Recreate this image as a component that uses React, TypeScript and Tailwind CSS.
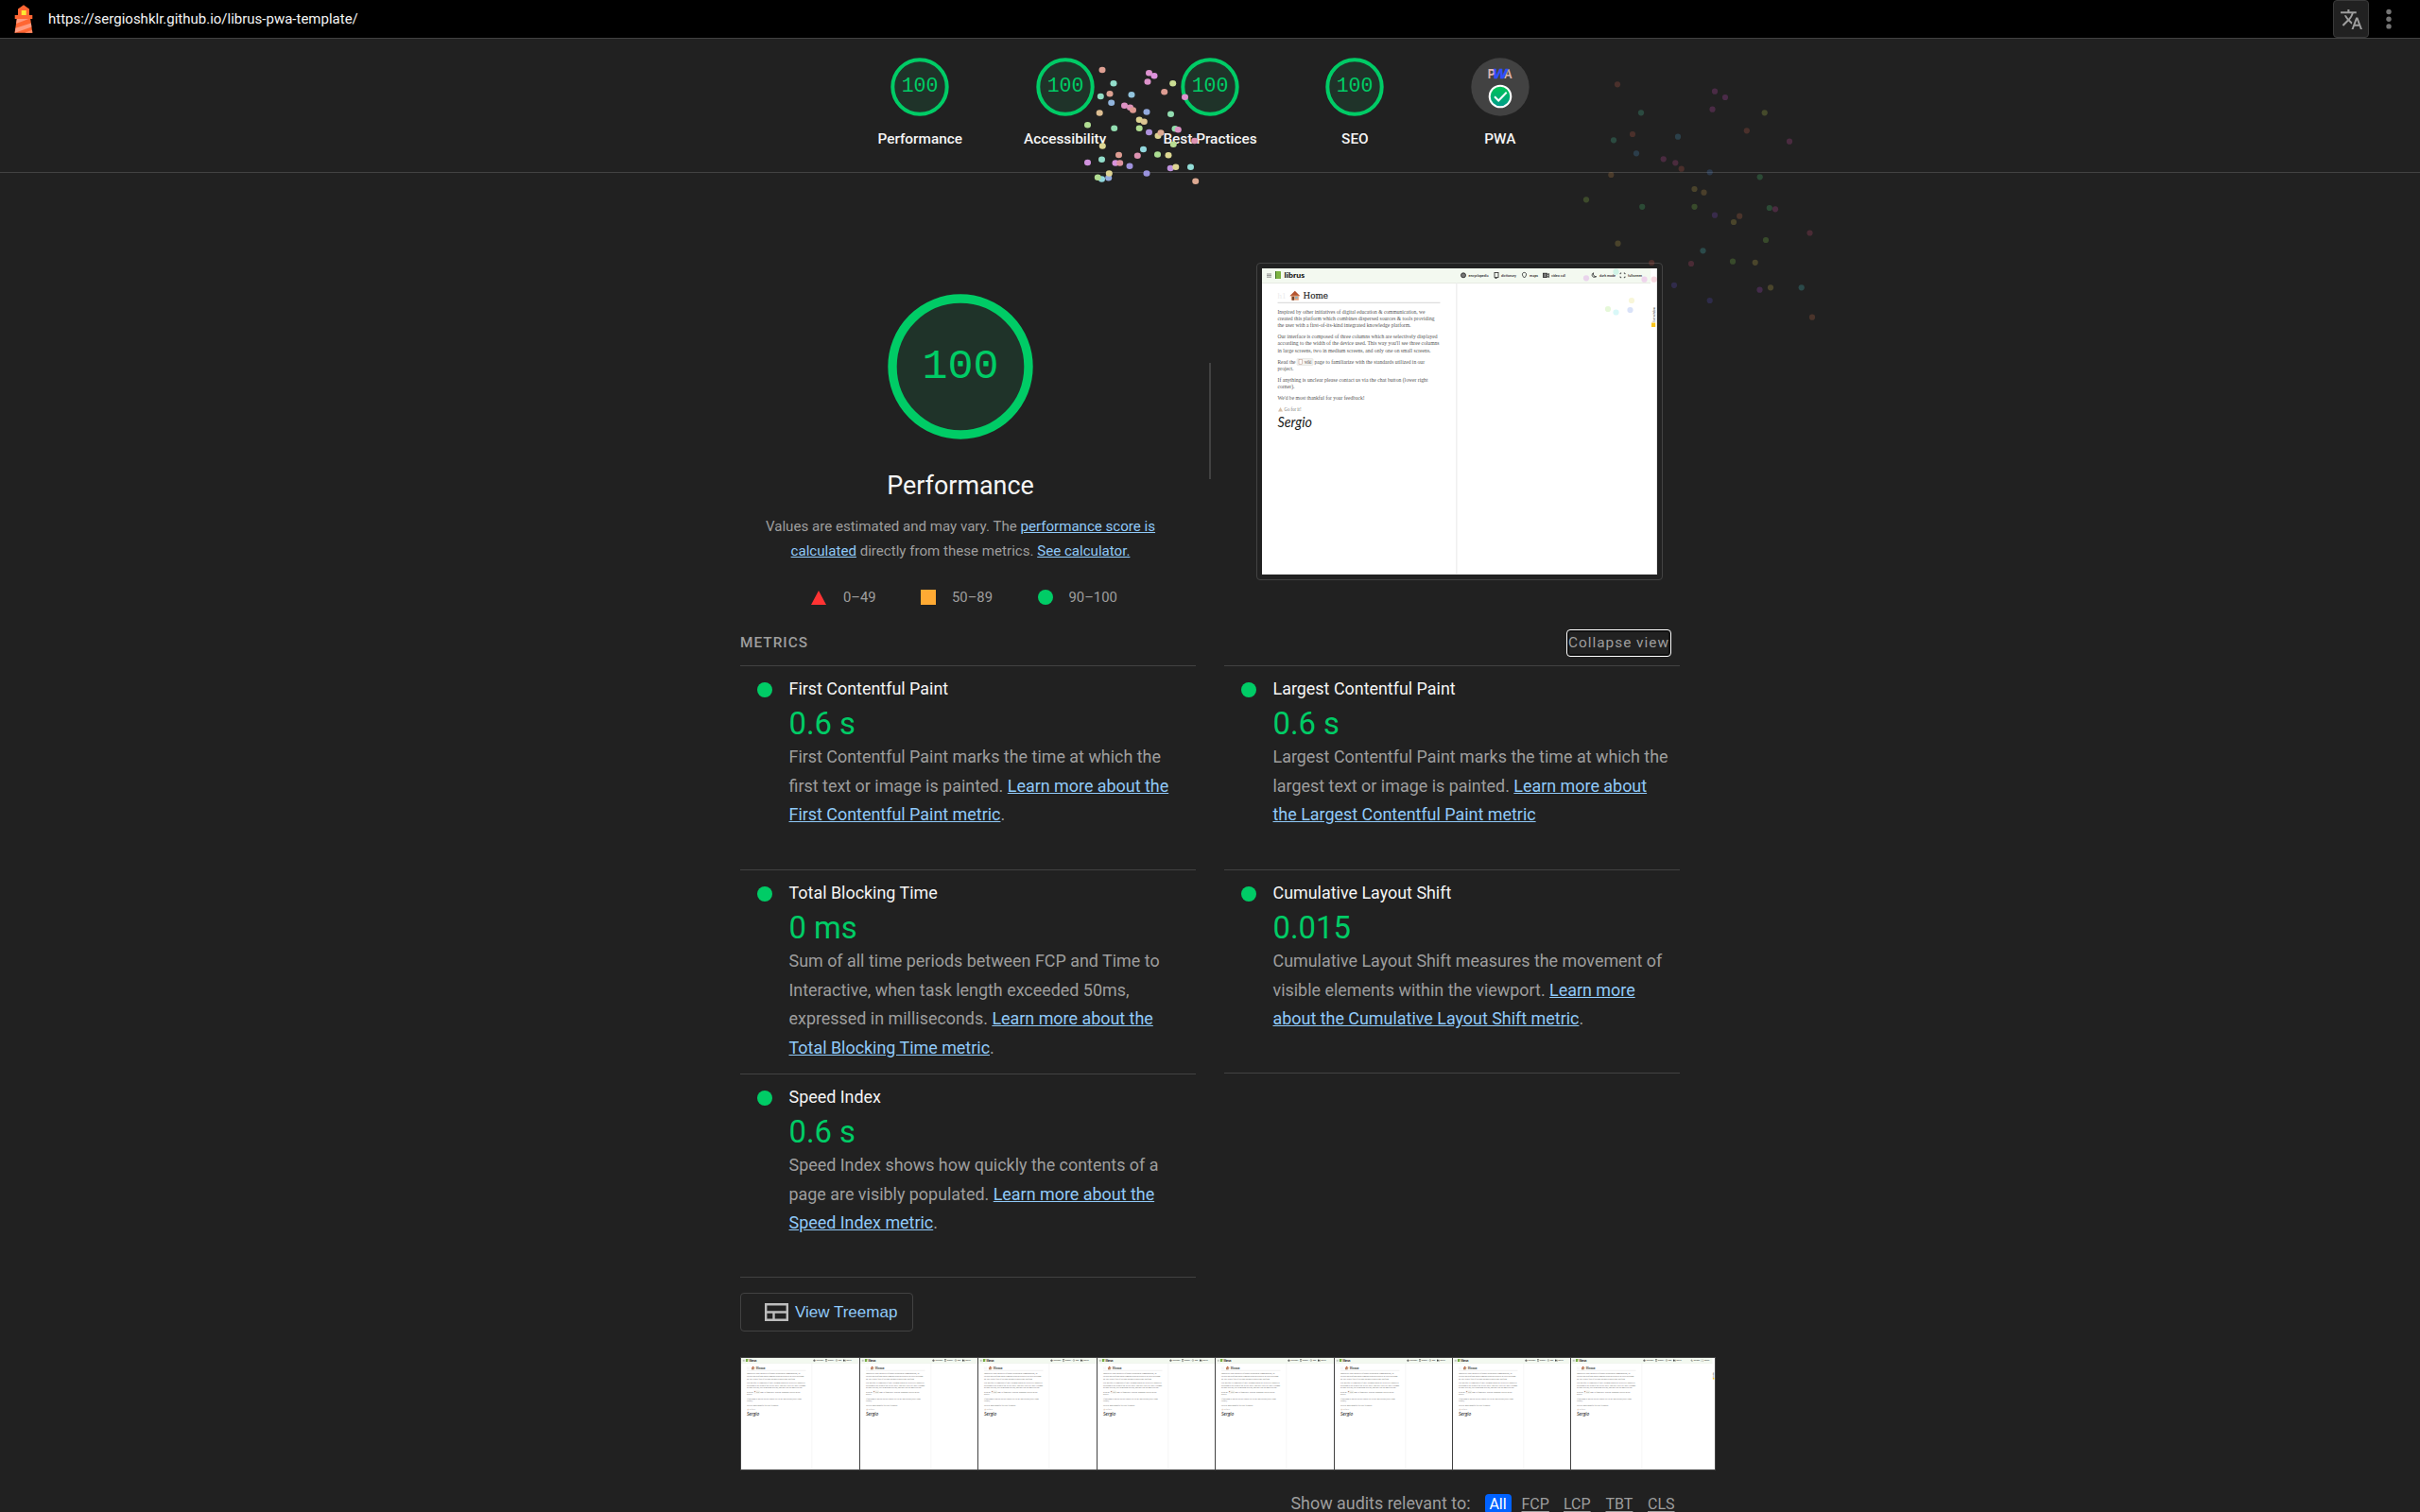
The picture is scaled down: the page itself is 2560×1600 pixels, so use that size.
import type { ReactNode } from "react";

const GREEN = "#00cc66";

function Lighthouse() {
  return (
    <svg className="h-[30px] w-5 shrink-0" viewBox="0 0 20 30">
      <path d="M4 4.500 10 0.200l6 4.300V11h3.300v4H0.700v-4H4z" fill="#f63" />
      <path d="M2.800 15h14.400l2.100 14.800H0.500z" fill="#f63" />
      <path d="M2.800 15h12.500L2.200 20z" fill="#ff9b80" />
      <path d="M17.900 19.500l.5 4L0.700 29.800l.8-5z" fill="#ff9b80" />
      <path d="M11 29.800l8-3 .3 3z" fill="#ff8a65" />
      <rect x="7.700" y="6" width="5" height="5" fill="#fdea32" />
    </svg>
  );
}

function TopBar() {
  return (
    <div className="flex h-[41px] items-center border-b border-[#424242] bg-black pl-[15px]">
      <Lighthouse />
      <span className="ml-4 flex-1 text-[15px] leading-5 text-[#f5f5f5]">https://sergioshklr.github.io/librus-pwa-template/</span>
      <button className="flex h-10 w-[38px] items-center justify-center rounded-[4px] border border-[#3a3a3a] bg-[#212121]">
        <svg className="size-[25px]" viewBox="0 0 24 24" fill="#9e9e9e">
          <path d="M12.870 15.070l-2.540-2.510.03-.03c1.740-1.940 2.980-4.170 3.710-6.530H17V4h-7V2H8v2H1v1.990h11.170C11.500 7.920 10.440 9.750 9 11.350 8.070 10.320 7.300 9.190 6.690 8h-2c.73 1.630 1.730 3.170 2.980 4.560l-5.090 5.020L4 19l5-5 3.110 3.110.76-2.040zM18.500 10h-2L12 22h2l1.120-3h4.750L21 22h2l-4.500-12zm-2.620 7l1.620-4.330L19.120 17h-3.240z" />
        </svg>
      </button>
      <svg className="ml-[15px] mr-[27px] h-6 w-[12px]" viewBox="0 0 12 24" fill="#757575">
        <circle cx="6" cy="4.500" r="2.700" />
        <circle cx="6" cy="12.200" r="2.700" />
        <circle cx="6" cy="19.900" r="2.700" />
      </svg>
    </div>
  );
}

function SmallGauge() {
  return (
    <svg className="size-[62px]" viewBox="0 0 62 62">
      <circle cx="31" cy="31" r="28.700" fill="#1f3329" stroke={GREEN} strokeWidth="4" />
      <text x="31" y="36.300" textAnchor="middle" fontSize="21.500" fill={GREEN} className="font-['Liberation_Mono',monospace]">100</text>
    </svg>
  );
}

function PwaGauge() {
  return (
    <svg className="size-[62px]" viewBox="0 0 62 62">
      <defs>
        <linearGradient id="pwa-check" x1="0" y1="0" x2="0" y2="1">
          <stop offset="0" stopColor="#00c853" />
          <stop offset="1" stopColor="#00998c" />
        </linearGradient>
      </defs>
      <circle cx="31" cy="31" r="30.700" fill="#424242" />
      <g className="font-['Liberation_Sans',sans-serif]" fontWeight="700">
        <text x="17.800" y="22" fontSize="14" textLength="8" lengthAdjust="spacingAndGlyphs" fill="#dcb5b1">P</text>
        <text x="34.800" y="22" fontSize="14" textLength="9" lengthAdjust="spacingAndGlyphs" fill="#dcb5b1">A</text>
        <text x="23.300" y="22" fontSize="14" fontStyle="italic" textLength="15" lengthAdjust="spacingAndGlyphs" fill="#304ffe" stroke="#304ffe" strokeWidth=".5">W</text>
      </g>
      <circle cx="31" cy="41" r="11.300" fill="url(#pwa-check)" stroke="#fff" strokeWidth="2" />
      <path d="M25 41.300l4.200 4.200 8.500-8.800" fill="none" stroke="#fff" strokeWidth="2" />
    </svg>
  );
}

function ScoresHeader() {
  return (
    <div className="flex h-[142px] justify-center border-b border-[#424242] pt-5">
      {["Performance", "Accessibility", "Best Practices", "SEO", "PWA"].map((name) => (
        <div key={name} className="flex w-[153.400px] flex-col items-center">
          {name === "PWA" ? <PwaGauge /> : <SmallGauge />}
          <span className="mt-[13.500px] text-[15.360px] font-medium leading-5 text-[#f5f5f5]">{name}</span>
        </div>
      ))}
    </div>
  );
}

const LINES: [number, number, string][] = [
  [48.500, 156, "Inspired by other initiatives of digital education & communication, we"],
  [55.700, 166, "created this platform which combines dispersed sources & tools providing"],
  [63, 141, "the user with a first-of-its-kind integrated knowledge platform."],
  [74.800, 169, "Our interface is composed of three columns which are selectively displayed"],
  [82, 171, "according to the width of the device used. This way you'll see three columns"],
  [89.200, 162, "in large screens, two in medium screens, and only one on small screens."],
  [108.400, 17, "project."],
  [120.300, 159, "If anything is unclear please contact us via the chat button (lower right"],
  [127.500, 18, "corner)."],
  [139.500, 92, "We'd be most thankful for your feedback!"],
];

function PageScene({ full }: { full: boolean }) {
  const serif = "font-['Liberation_Serif',serif]";
  return (
    <svg className="block size-full" viewBox="0 0 418 324" preserveAspectRatio="none">
      <rect width="418" height="324" fill="#fff" />
      <rect width="411" height="15.500" fill="#f3f9f0" />
      <path d="M0 15.500h411" stroke="#dfe4da" strokeWidth=".7" />
      <path d="M205.800 15.500V324" stroke="#f0f0f0" strokeWidth="1.600" />
      <path d="M0 323.500h418M417.500 0v324" stroke="#e8e8e8" strokeWidth="1" />
      <path d="M5 6h5M5 7.600h5M5 9.200h5" stroke="#777" strokeWidth=".8" />
      <rect x="14" y="3" width="6" height="8" rx=".6" fill="#7cb342" />
      <path d="M14.500 3v8" stroke="#386a20" strokeWidth=".9" />
      <g className="font-['Lato',sans-serif]">
        <text x="23.500" y="9.800" fontSize="8" fontWeight="900" textLength="21.500" lengthAdjust="spacingAndGlyphs" fill="#111">librus</text>
        <g fontSize="4.200" fontWeight="700" fill="#333">
          <text x="218.500" y="8.600" textLength="21" lengthAdjust="spacingAndGlyphs">encyclopedia</text>
          <text x="253" y="8.600" textLength="16" lengthAdjust="spacingAndGlyphs">dictionary</text>
          <text x="283" y="8.600" textLength="9" lengthAdjust="spacingAndGlyphs">maps</text>
          <text x="306" y="8.600" textLength="15" lengthAdjust="spacingAndGlyphs">video call</text>
          {full && <text x="357" y="8.600" textLength="17" lengthAdjust="spacingAndGlyphs">dark mode</text>}
          {full && <text x="387" y="8.600" textLength="15" lengthAdjust="spacingAndGlyphs">fullscreen</text>}
        </g>
      </g>
      <g fill="none" stroke="#222" strokeWidth=".8">
        <circle cx="213" cy="7.300" r="2.500" fill="#777" />
        <rect x="246" y="4.500" width="4" height="5" />
        <path d="M246.500 10.500h2" />
        <path d="M277.500 10c-3.200-3-2.300-5.600 0-5.600s3.200 2.600 0 5.600z" />
        <rect x="297.500" y="5.200" width="4" height="4.200" fill="#777" />
        <path d="M302 6.500l1.500-1v4l-1.500-1" />
        {full && <path d="M350.500 4.700c-3 2.600-.5 6 3.200 4-2.600.3-3.700-2-3.200-4z" />}
        {full && <path d="M379 6.200V5h1.200M382.800 5H384v1.200M384 8.500v1.200h-1.200M380.200 9.700H379V8.500" />}
      </g>
      <text x="16.500" y="31.800" fontSize="9" textLength="9" fill="#ececec" className={serif}>h1</text>
      <path d="M29.300 29.300l5.500-5.500 5.500 5.500z" fill="#b5542f" />
      <rect x="30.800" y="28.700" width="8" height="5" fill="#e2a27c" />
      <rect x="31.800" y="29.800" width="2.200" height="3.900" fill="#70452f" />
      <rect x="35.200" y="29.800" width="2.400" height="2" fill="#7fb3cc" />
      <text x="43.500" y="32" fontSize="10" textLength="26.500" lengthAdjust="spacingAndGlyphs" fill="#222" stroke="#222" strokeWidth=".2" className="font-['DejaVu_Serif',serif]">Home</text>
      <path d="M16.500 36.300h172" stroke="#ccc" strokeWidth=".8" />
      <g fontSize="5.200" fill="#555" className={serif}>
        {LINES.map(([y, w, t]) => (
          <text key={y} x="16.500" y={y - 0.7} textLength={w} lengthAdjust="spacingAndGlyphs">{t}</text>
        ))}
        <text x="16.500" y="100.500" textLength="19" lengthAdjust="spacingAndGlyphs">Read the</text>
        <rect x="37" y="95.500" width="17" height="7" rx="1" fill="#f3f3f0" stroke="#d5d5d0" strokeWidth=".4" />
        <rect x="39" y="96.700" width="3.400" height="4.500" fill="#fff" stroke="#b98a7a" strokeWidth=".5" />
        <text x="45" y="100.500" textLength="7.500" lengthAdjust="spacingAndGlyphs">wiki</text>
        <text x="55.500" y="100.500" textLength="116.500" lengthAdjust="spacingAndGlyphs">page to familiarize with the standards utilized in our</text>
        <text x="23.500" y="151" textLength="18" lengthAdjust="spacingAndGlyphs" fill="#777">Go for it!</text>
      </g>
      <path d="M17 151.500l2.500-4.500 2.500 4.500z" fill="#d8c0a8" />
      <text x="16.500" y="167.500" fontSize="15.500" fontStyle="italic" textLength="36.500" lengthAdjust="spacingAndGlyphs" fill="#1a1a1a" className="font-['Lato',cursive]">Sergio</text>
      {full && (
        <g>
          <rect x="412" y="57.500" width="4.200" height="4.500" fill="#f9c51d" />
          <text transform="translate(415.600 56.500) rotate(-90)" fontSize="3.600" textLength="15.500" lengthAdjust="spacingAndGlyphs" fill="#333" className="font-['Lato',sans-serif]">live window</text>
        </g>
      )}
    </svg>
  );
}

function Link({ children }: { children: ReactNode }) {
  return <a className="text-[#90caf9] underline">{children}</a>;
}

function Summary() {
  return (
    <section className="flex">
      <div className="flex w-[466px] flex-col items-center pt-32">
        <svg className="size-[154px]" viewBox="0 0 154 154">
          <circle cx="77" cy="77" r="72" fill="#1f3329" stroke={GREEN} strokeWidth="9.400" />
          <text x="77" y="89" textAnchor="middle" fontSize="45" fill={GREEN} className="font-['Liberation_Mono',monospace]">100</text>
        </svg>
        <h2 className="mt-[31px] text-[26.900px] leading-9 text-[#f5f5f5]">Performance</h2>
        <p className="mt-3 text-center text-[15.100px] leading-[26px] text-[#9e9e9e]">
          Values are estimated and may vary. The <Link>performance score is<br />calculated</Link> directly from these metrics. <Link>See calculator.</Link>
        </p>
        <div className="mt-[26px] flex h-5 w-full items-center pl-[75px] text-[14.800px] leading-5 text-[#9e9e9e]">
          <div className="flex w-[116px] items-center gap-[18px]">
            <svg className="size-4" viewBox="0 0 16 16"><path d="M8 1l8 15H0z" fill="#ff3333" /></svg>
            0–49
          </div>
          <div className="flex w-[123.500px] items-center gap-[17px]">
            <span className="size-4 bg-[#ffaa33]" />
            50–89
          </div>
          <div className="flex items-center gap-[17px]">
            <span className="size-4 rounded-full bg-[#00cc66]" />
            90–100
          </div>
        </div>
      </div>
      <div className="ml-[30px] mt-[201px] h-[123px] w-[2px] bg-[#424242]" />
      <div className="ml-12 mt-[95px] h-[336px] w-[430px] rounded-[4px] border border-[#424242] p-[5px]">
        <PageScene full />
      </div>
    </section>
  );
}

function Metric({ title, value, last, children }: { title: string; value: string; last?: boolean; children: ReactNode }) {
  return (
    <div className={"flex h-[216px] border-t border-[#424242] pl-[18px] pt-2 " + (last ? "border-b" : "")}>
      <span className="mt-[9px] size-4 shrink-0 rounded-full bg-[#00cc66]" />
      <div className="ml-[17.500px] whitespace-nowrap text-[17.920px]">
        <div className="h-[31px] leading-[31px] text-[#f5f5f5]">{title}</div>
        <div className="h-[42px] text-[32.770px] leading-[45px] text-[#00cc66]">{value}</div>
        <p className="leading-[30.600px] text-[#9e9e9e]">{children}</p>
      </div>
    </div>
  );
}

function Metrics() {
  return (
    <section>
      <div className="mb-[7px] mt-[22px] flex h-[33px] items-center justify-between pr-[9px]">
        <span className="mb-[2px] text-[15.360px] font-medium leading-5 tracking-[1.020px] text-[#9e9e9e]">METRICS</span>
        <button className="h-[29px] w-[111px] whitespace-nowrap rounded-[4px] border border-white text-center text-[15.360px] leading-[27px] tracking-[1px] text-[#9e9e9e] shadow-[inset_0_0_0_2px_#101010]">Collapse view</button>
      </div>
      <div className="flex items-start justify-between">
        <div className="w-[482px]">
          <Metric title="First Contentful Paint" value="0.6 s">
            First Contentful Paint marks the time at which the<br />first text or image is painted. <Link>Learn more about the<br />First Contentful Paint metric</Link>.
          </Metric>
          <Metric title="Total Blocking Time" value="0 ms">
            Sum of all time periods between FCP and Time to<br />Interactive, when task length exceeded 50ms,<br />expressed in milliseconds. <Link>Learn more about the<br />Total Blocking Time metric</Link>.
          </Metric>
          <Metric title="Speed Index" value="0.6 s" last>
            Speed Index shows how quickly the contents of a<br />page are visibly populated. <Link>Learn more about the<br />Speed Index metric</Link>.
          </Metric>
        </div>
        <div className="w-[482px]">
          <Metric title="Largest Contentful Paint" value="0.6 s">
            Largest Contentful Paint marks the time at which the<br />largest text or image is painted. <Link>Learn more about<br />the Largest Contentful Paint metric</Link>
          </Metric>
          <Metric title="Cumulative Layout Shift" value="0.015" last>
            Cumulative Layout Shift measures the movement of<br />visible elements within the viewport. <Link>Learn more<br />about the Cumulative Layout Shift metric</Link>.
          </Metric>
        </div>
      </div>
    </section>
  );
}

function Filmstrip() {
  return (
    <div className="mt-[27px] flex h-[120px] w-[1032px]">
      {[0, 1, 2, 3, 4, 5, 6, 7].map((i) => (
        <div key={i} className={"shrink-0 overflow-hidden border-y border-l border-[#424242] " + (i === 0 ? "w-[126px]" : i < 7 ? "w-[125.400px]" : "w-[154px] border-r")}>
          <div className="h-[118px] w-[152px]"><PageScene full={i === 7} /></div>
        </div>
      ))}
    </div>
  );
}

function AuditFilter() {
  return (
    <div className="mt-[19px] flex items-baseline justify-end pr-[5.500px] text-[17.920px] leading-[31px] text-[#9e9e9e]">
      <span className="mr-[15px]">Show audits relevant to:</span>
      <span className="mr-[11px] w-7 rounded-[4px] bg-[#0062ff] text-center text-base leading-[21px] text-white">All</span>
      <div className="flex gap-4 text-base">
        {["FCP", "LCP", "TBT", "CLS"].map((m) => (
          <span key={m} className="w-[28.500px] underline underline-offset-2">{m}</span>
        ))}
      </div>
    </div>
  );
}

// x, y, hue of each particle, relative to the burst's corner
const BURST: [number, number, number][] = [
  [266, 34, 10], [278, 48.300, 165], [315.500, 37.300, 310], [321, 40.300, 300], [314, 46.500, 315], [340.700, 48.300, 75],
  [331.700, 57.300, 8], [264.300, 62, 160], [274, 59.200, 12], [297, 60.300, 200], [275.700, 68.700, 212], [289.500, 71.800, 320],
  [295.500, 73.800, 330], [298.500, 76.500, 5], [263.200, 79.500, 35], [313, 78.500, 222], [338.500, 80.700, 145], [353.500, 62.700, 310],
  [250.500, 92.300, 95], [278.700, 95.800, 145], [305.200, 86.800, 52], [310.300, 88.700, 40], [305.200, 95.800, 95], [315.500, 100, 262],
  [325, 103.700, 52], [328, 100.500, 18], [343, 96.300, 140], [346.300, 97.200, 320], [363.700, 109, 335], [341.300, 112.700, 90],
  [266.300, 114.500, 55], [309.500, 118, 185], [283.500, 124, 8], [303.300, 124.800, 335], [324.500, 123.500, 100], [336, 124.200, 55],
  [265.500, 128.800, 165], [250.500, 132, 290], [280, 132.500, 295], [284.700, 132.500, 350], [295, 135.700, 250], [338.200, 138, 275],
  [343.800, 136.800, 52], [359.500, 136.800, 175], [313, 143.500, 245], [265.500, 149.500, 185], [261.300, 147.700, 95],
  [272.700, 148.300, 222], [273.300, 143.500, 52], [364.700, 151.700, 18],
];

const FAR: [number, number, number][] = [
  [371, 49.300, 10], [396, 79.300, 160], [474, 56.700, 310], [485, 63, 305], [471.500, 75.700, 310], [526.700, 79.300, 70],
  [507.800, 98.300, 10], [553, 109.700, 320], [367, 108.300, 160], [387, 102, 10], [435, 104.700, 200], [391, 122.300, 205],
  [419.700, 128.300, 320], [432.300, 132.300, 325], [438.700, 138.700, 8], [364.300, 145, 30], [468.700, 142.300, 215], [521.700, 147.300, 140],
  [338, 171.300, 85], [397.200, 178.800, 140], [452.500, 160, 45], [462.500, 163.700, 38], [452.500, 178.800, 95], [474, 187.700, 265],
  [531.800, 180, 140], [538, 181.300, 320], [500.200, 188.700, 18], [494, 195, 50], [574.500, 206.500, 340], [528, 214, 95],
  [371.500, 217.700, 45], [461.500, 225.300, 180], [449, 239, 340], [493, 236.700, 95], [516.700, 237.800, 50], [407.200, 238, 5],
  [431, 261.800, 250], [521.500, 266.700, 285], [533, 264.300, 50], [565.700, 264.300, 180], [468.700, 278, 245], [577, 295.700, 18],
  [338, 254.300, 290], [369.500, 247.700, 165], [399.500, 255.700, 300], [409.700, 255.700, 345], [386, 278, 55], [361, 287, 95],
  [369.500, 290.500, 180], [384.500, 288, 222],
];

function Confetti() {
  return (
    <svg className="pointer-events-none absolute left-0 top-0 h-[400px] w-[2560px]" viewBox="0 0 2560 400">
      {BURST.map(([x, y, h]) => (
        <ellipse key={`${x}-${y}`} cx={x + 900} cy={y + 40} rx="3.500" ry="3.200" fill={`hsl(${h} 52% 72%)`} />
      ))}
      {FAR.map(([x, y, h]) => (
        <circle key={`${x}-${y}`} cx={x + 1340} cy={y + 40} r="3.100" fill={`hsl(${h} 70% 60%)`} opacity=".22" />
      ))}
    </svg>
  );
}

export default function App() {
  return (
    <div className="relative h-[1600px] w-full overflow-hidden bg-[#212121] font-['Roboto',sans-serif]">
      <TopBar />
      <ScoresHeader />
      <main className="ml-[783px] w-[994px]">
        <Summary />
        <Metrics />
        <button className="mt-4 flex h-[41px] w-[183px] items-center rounded-[4px] border border-[#424242] pl-[25px] font-['Liberation_Sans',sans-serif] text-[17px] leading-5 text-[#90caf9]">
          <svg className="mr-[7px] h-[19px] w-[25px]" viewBox="0 0 25 19" fill="none" stroke="#bdbdbd" strokeWidth="2.400">
            <path d="M1.200 1.200h22.600v16.600H1.200zM1.200 9.500h22.600M9.500 9.500v8.300" />
          </svg>
          View Treemap
        </button>
        <Filmstrip />
        <AuditFilter />
      </main>
      <Confetti />
    </div>
  );
}
